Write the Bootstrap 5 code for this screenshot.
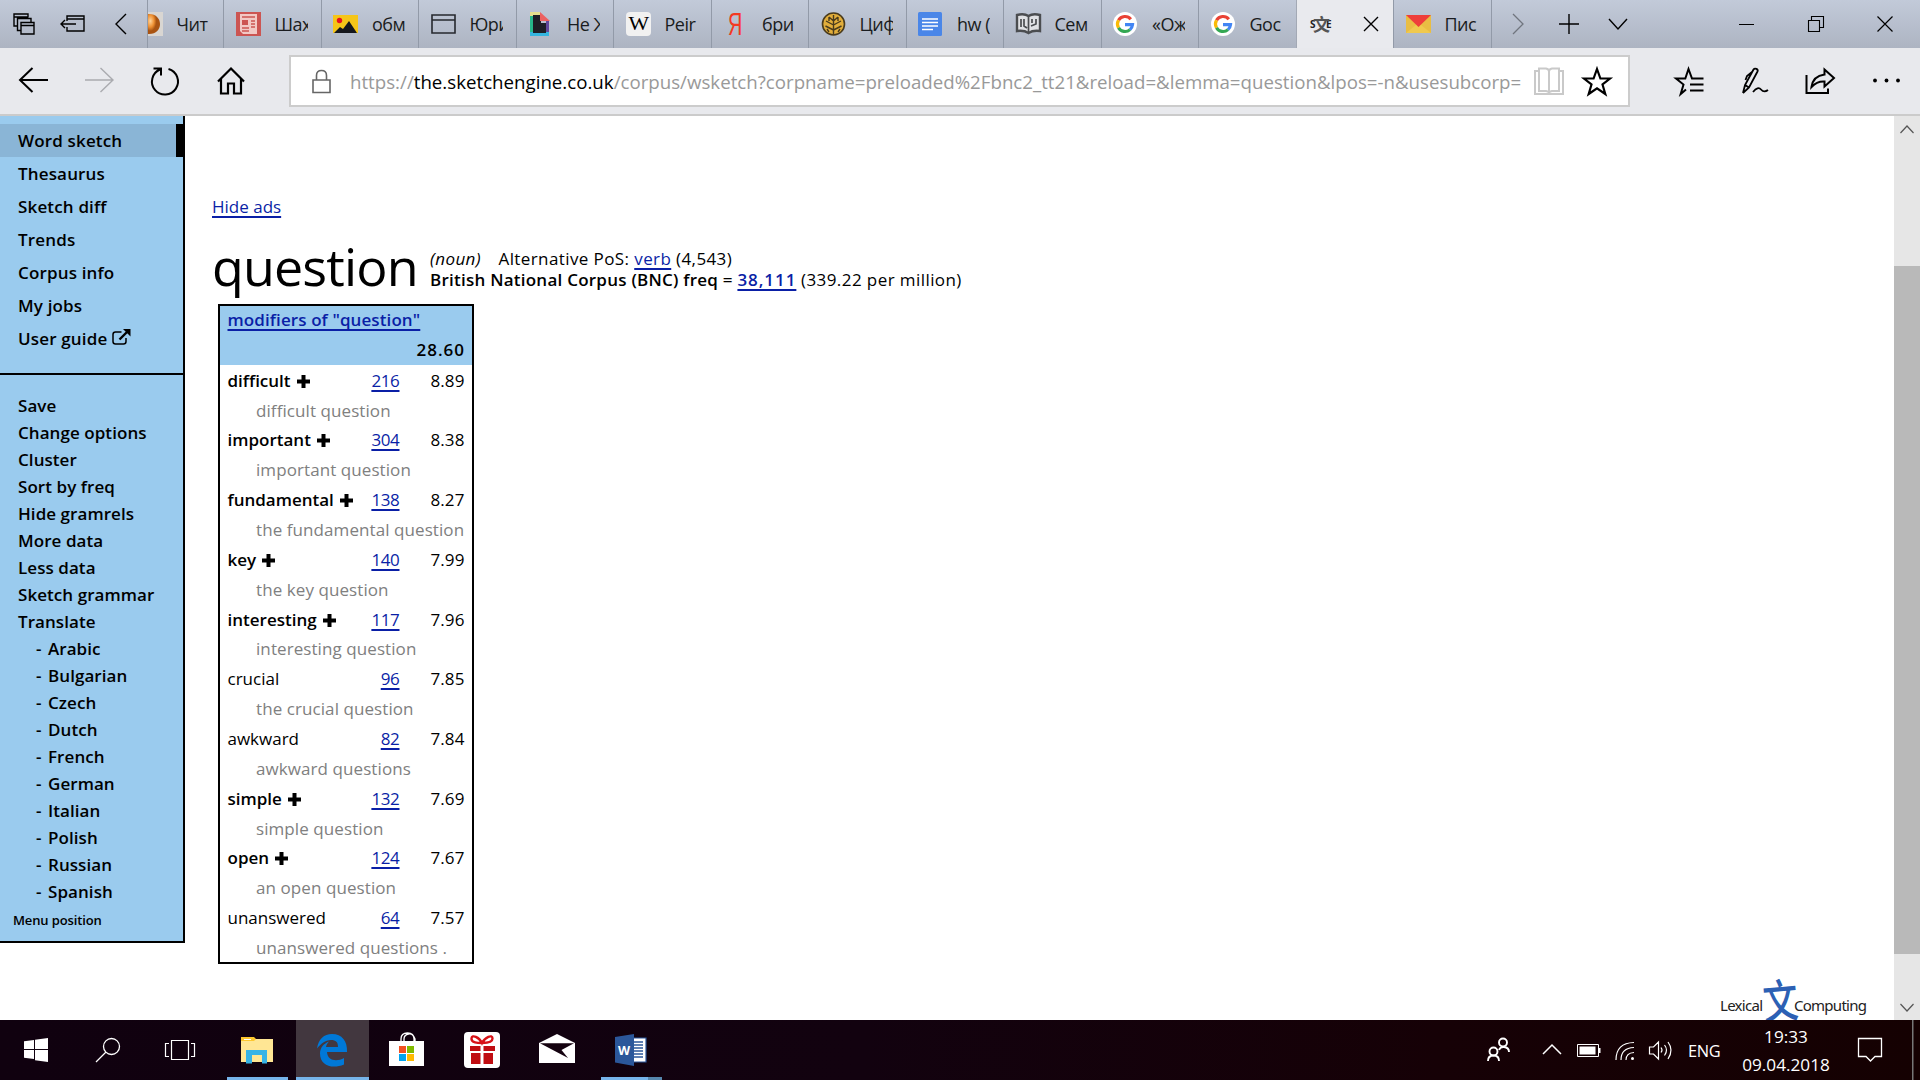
<!DOCTYPE html>
<html lang="en">
<head>
<meta charset="utf-8">
<title>Word sketch: question</title>
<link rel="stylesheet" href="https://cdn.jsdelivr.net/npm/bootstrap@5.3.0/dist/css/bootstrap.min.css">
<script src="https://cdn.jsdelivr.net/npm/bootstrap@5.3.0/dist/js/bootstrap.bundle.min.js"></script>
<style>
body{font-family:"Open Sans","Noto Sans",sans-serif;font-size:17px;color:#000;background:#fff;width:1920px;height:1080px;overflow:hidden;font-variant-ligatures:none}
svg{display:block;flex:none;overflow:visible}
.ln{fill:none;stroke:#000;stroke-width:1.4}
.tabstrip{height:48px;background:linear-gradient(#c2cad9,#adb4c2)}
.tabtools{width:146.5px;padding-left:13px}
.btab{width:97.5px;border-left:1.5px solid #929aa8;padding-left:11.5px;font-size:18px;letter-spacing:-.5px;color:#1a1c20;flex:none}
.btab svg{margin-right:14px}
.tabname{width:33px;overflow:hidden;white-space:nowrap;line-height:30px}
.tab-first{width:76.5px;padding-left:0}
.tab-now{background:#e9eaee;border-color:#a3a9b5;padding-left:13px}
.strip-end{border-left:1.5px solid #929aa8;padding-left:20px}
.navrow{height:68px;background:#e8e9ed;border-bottom:2px solid #cbcbcb}
.addr{width:1341px;height:52px;border:2px solid #ccc;background:#fff;margin-left:44px}
.url{font-size:18.7px;color:#999;width:1173px;white-space:nowrap;overflow:hidden;margin-left:18px;padding-top:2px}
.page-area{height:904px;overflow:hidden}
.sidebar{width:185px;height:827px;background:#9acbee;border-right:2px solid #000;border-bottom:2px solid #000;font-weight:600}
.tools{padding-top:8px;height:259px;border-bottom:2px solid #000}
.tools a,.opts a{display:block;color:#000;text-decoration:none;padding-left:18px;white-space:nowrap;letter-spacing:.06px}
.tools a{height:33px;line-height:33px;letter-spacing:.16px}
.tools a.now{background:#8ab5d6;border-right:7px solid #000}
.opts{padding-top:16.5px}
.opts a{height:27px;line-height:27px}
.opts a.lang{padding-left:36px;word-spacing:2px}
.opts a.pos{font-size:13px;padding-left:13px;height:30px;line-height:31px;letter-spacing:-.12px}
.lk{color:#0a1fa6;text-decoration:underline;text-decoration-thickness:2px;text-underline-offset:3px;text-decoration-skip-ink:none}
.content-col{padding:79px 0 0 27px}
.hide-ads{line-height:24px;height:24px}
.headrow{height:60px;margin-top:16px}
.headword{font-size:52px;line-height:61px;letter-spacing:-.85px;width:218px}
.facts{line-height:21px;padding-top:12.5px;white-space:pre;letter-spacing:.24px}
.facts b{font-weight:600}
.facts i{margin-right:3px}
.facts .alt{letter-spacing:.4px}
.facts b .lk{letter-spacing:.95px}
.facts .pm{letter-spacing:.42px}
.ws{width:256px;height:660px;border:2px solid #000;margin:9px 0 0 6px}
.ws-head{height:59px;background:#9acbee;padding:0 7px 0 7.5px;font-weight:600}
.ws-head .gramrel{height:29.5px;line-height:27.5px;letter-spacing:.1px}
.ws-head .total{height:29.5px;line-height:28.5px;letter-spacing:1px}
.rowlist{padding-top:.7px}
.wr{height:29.87px;line-height:29.87px;padding-left:7.5px;white-space:nowrap}
.wr .w{flex:1;min-width:0}
.wr .n{width:40px;flex:none;text-align:right;letter-spacing:-.35px}
.wr .s{width:65px;flex:none;text-align:right;margin-right:7.5px;letter-spacing:.1px}
.ex{height:29.87px;line-height:29.87px;padding-left:36px;color:#808080;white-space:nowrap;letter-spacing:.08px}
.plus{display:inline-block;margin-left:6px;vertical-align:-1px}
.logo-row{margin:auto 26px 0 0;height:44px}
.sbar{width:26px;background:#e6e6e6}
.thumb{height:688px;background:#b9b9b9}
.taskbar{height:60px;background:linear-gradient(90deg,#10010f 0,#12020f 45%,#160106 75%,#150102)}
.tk{height:60px;flex:none}
.on{border-bottom:3px solid #76b4ea}
.edge-tile{width:73px;margin-left:8px;background:#42373f}
.w-logo{font:700 12.5px "Open Sans",sans-serif;fill:#fff}
.tray{color:#fff}
.lang-ind{width:64px;font-size:16.4px;letter-spacing:-.3px;line-height:61px;padding-left:16px;margin-left:-7px}
.clock{width:100px;text-align:center;line-height:28px;font-size:17.2px;padding-top:3px}
</style>
</head>
<body class="d-flex flex-column">

<!-- Tab strip -->
<div class="tabstrip d-flex flex-none">
  <div class="tabtools d-flex align-items-center">
    <svg width="23" height="22" class="ln"><path d="M4.500 13H1V1h14v3.500M1 4h14M8 17.500H4.500V5.500H18V9"/><path d="M8 9.500h13V21H8zM8 12.500h13"/></svg>
    <svg width="25" height="18" class="ln" style="margin-left:24px"><path d="M7 6V1h17v15H7v-4M7 4h17M1 9h15M5 5L1 9l4 4"/></svg>
    <svg width="12" height="22" class="ln" style="margin-left:30px"><path d="M11 1L1 11l10 10"/></svg>
  </div>
  <div class="btab tab-first d-flex align-items-center"><svg width="15" height="24"><defs><radialGradient id="orb" cx=".2" cy=".35"><stop offset="0" stop-color="#ffd49a"/><stop offset=".6" stop-color="#ee9032"/><stop offset="1" stop-color="#a95311"/></radialGradient></defs><path d="M0 0h15v24H0z" fill="#d9d6d2"/><path d="M0 2c16-1 16 21 0 20z" fill="url(#orb)"/></svg><span class="tabname">Чит</span></div>
  <div class="btab d-flex align-items-center"><svg width="25" height="24"><path fill="#cc5552" d="M0 0h25v24H0z"/><path fill="#f2c9c5" d="M4 2h17v20H7l-3-3z"/><path fill="none" stroke="#cc5552" stroke-width="1.500" d="M6 5h13M6 16h7M6 19h7M15 9h4M15 12h4M15 15h4"/><path fill="#cc5552" d="M6 8h6v5H6z"/></svg><span class="tabname">Шах</span></div>
  <div class="btab d-flex align-items-center"><svg width="25" height="18"><path fill="#f5c518" d="M0 0h25v18H0z"/><circle cx="6.500" cy="5.500" r="2.700" fill="#e8131d"/><path fill="#16181d" d="M1 18l6-6 3 2 6-8 8 12z"/></svg><span class="tabname">обм</span></div>
  <div class="btab d-flex align-items-center"><svg width="25" height="20" class="ln"><path d="M1 1h23v18H1zM1 6h23" stroke="#26282e" stroke-width="1.600"/></svg><span class="tabname">Юри</span></div>
  <div class="btab d-flex align-items-center"><svg width="25" height="24"><path fill="#e5e08d" d="M2 0h10v4H2z"/><path fill="#27b78a" d="M2 4h3v17H2z"/><path fill="#35b5df" d="M2 20h19v4H2z"/><path fill="#61479b" d="M18 9h3v11h-3z"/><path fill="#1e1f26" d="M5 3h8v8h5v10H5z"/><path fill="#ec6161" d="M12 0l10 9H12z"/></svg><span class="tabname">Не Ж</span></div>
  <div class="btab d-flex align-items-center"><svg width="25" height="24"><rect width="25" height="24" rx="4" fill="#f1f1f1"/><text x="12.500" y="18" text-anchor="middle" font-family="Liberation Serif,serif" font-size="19" textLength="20" lengthAdjust="spacingAndGlyphs">W</text></svg><span class="tabname">Peir</span></div>
  <div class="btab d-flex align-items-center"><svg width="25" height="26"><text x="12" y="24" text-anchor="middle" font-family="Liberation Sans,sans-serif" font-size="31" fill="#f33922" textLength="14" lengthAdjust="spacingAndGlyphs">Я</text></svg><span class="tabname">бри</span></div>
  <div class="btab d-flex align-items-center"><svg width="25" height="24"><circle cx="12.500" cy="12" r="11" fill="#e2ae3b" stroke="#4a3b1c" stroke-width="1.600"/><path d="M12.500 3v20M12.500 9L8 5M12.500 13L5 9M12.500 18l-8-4M12.500 9L17 5M12.500 13L20 9M12.500 18l8-4M8 5v4M17 5v4M8 20l-2-3M17 20l2-3" fill="none" stroke="#4a3b1c" stroke-width="1.400"/></svg><span class="tabname">Циф</span></div>
  <div class="btab d-flex align-items-center"><svg width="25" height="24"><rect width="24" height="24" rx="1.500" fill="#4a86e8"/><path d="M4 7h16M4 10.500h16M4 14h16M4 17.500h11" stroke="#fff" stroke-width="1.700"/></svg><span class="tabname">hw (</span></div>
  <div class="btab d-flex align-items-center"><svg width="25" height="22"><path d="M1 2q7-2 11.500 1Q17 0 24 2v16q-7-1-11.500 2Q8 17 1 18z" fill="#e0e1e4" stroke="#4b4d50" stroke-width="2.400"/><path d="M12.500 3v16M5 6v8M8 6v7l3 2M20 6v5l-5 2M16 6v4" fill="none" stroke="#4b4d50" stroke-width="1.700"/></svg><span class="tabname">Сем</span></div>
  <div class="btab d-flex align-items-center"><svg width="25" height="24"><ellipse cx="12" cy="12" rx="12" ry="12" fill="#fff"/><g fill="none" stroke-width="3.200"><path d="M17.800 7.200A7.500 7.500 0 0 0 5.500 8.300" stroke="#e94235"/><path d="M5.500 8.300a7.500 7.500 0 0 0 0 7.400" stroke="#fabb05"/><path d="M5.500 15.700a7.500 7.500 0 0 0 11.500 1.900" stroke="#34a853"/><path d="M17 17.600a7.500 7.500 0 0 0 2.500-4.900H12" stroke="#4285f4"/></g></svg><span class="tabname">«Ож</span></div>
  <div class="btab d-flex align-items-center"><svg width="25" height="24"><ellipse cx="12" cy="12" rx="12" ry="12" fill="#fff"/><g fill="none" stroke-width="3.200"><path d="M17.800 7.200A7.500 7.500 0 0 0 5.500 8.300" stroke="#e94235"/><path d="M5.500 8.300a7.500 7.500 0 0 0 0 7.400" stroke="#fabb05"/><path d="M5.500 15.700a7.500 7.500 0 0 0 11.500 1.900" stroke="#34a853"/><path d="M17 17.600a7.500 7.500 0 0 0 2.500-4.900H12" stroke="#4285f4"/></g></svg><span class="tabname">Goc</span></div>
  <div class="btab tab-now d-flex align-items-center"><svg width="22" height="22" font-family="Open Sans,sans-serif" font-weight="700" font-size="10" fill="#222"><text x="0" y="15">S</text><text x="16" y="15">E</text><text x="3" y="18" font-family="Noto Sans CJK SC,sans-serif" font-size="17" fill="#555">文</text></svg><svg width="16" height="16" class="ln" style="margin-left:17px"><path d="M1 1l14 14M15 1L1 15"/></svg></div>
  <div class="btab d-flex align-items-center"><svg width="25" height="18"><path fill="#e9bd43" d="M0 0h25v18H0z"/><path fill="#f0c94e" d="M0 18L12.500 8 25 18z"/><path fill="#ee3e3b" d="M0 0h25L12.500 12z"/></svg><span class="tabname">Пис</span></div>
  <div class="strip-end d-flex align-items-center">
    <svg width="12" height="22"><path d="M1 1l10 10L1 21" fill="none" stroke="#70757e" stroke-width="1.300"/></svg>
    <svg width="20" height="20" class="ln" style="margin-left:35px"><path d="M10 0v20M0 10h20"/></svg>
    <svg width="20" height="11" class="ln" style="margin-left:29px"><path d="M1 0l9 10 9-10"/></svg>
    <svg width="16" height="16" class="ln" style="margin-left:111px"><path d="M0 8.500h15" stroke-width="1"/></svg>
    <svg width="16" height="16" class="ln" style="margin-left:53px"><path d="M.5 4.500h11v11H.5zM3.500 4.500v-4h12v11h-4" stroke-width="1.100"/></svg>
    <svg width="16" height="16" class="ln" style="margin-left:53px"><path d="M.5.5l15 15M15.500.5l-15 15" stroke-width="1.200"/></svg>
  </div>
</div>

<!-- Address row -->
<div class="navrow d-flex align-items-center">
  <svg width="29" height="28" class="ln" style="margin-left:19px;stroke-width:2"><path d="M29 13H1M13.500 1l-12.500 12 12.500 12"/></svg>
  <svg width="29" height="28" class="ln" style="margin-left:37px;stroke:#a3a4a8;opacity:.9"><path d="M0 13h28M15.500 1L28 13 15.500 25" /></svg>
  <svg width="28" height="28" class="ln" style="margin-left:37px;stroke-width:2"><path d="M17.500 2A13 13 0 1 1 9 2.500M2.500 1.500H10v7"/></svg>
  <svg width="28" height="28" class="ln" style="margin-left:38px;stroke-width:2.2"><path d="M1 14.500L14 1.500l13 13M4 12v14.500h7V16.500h6v10h7V12"/></svg>
  <div class="addr d-flex align-items-center">
    <svg width="20" height="25" class="ln" style="margin-left:21px;stroke:#666;stroke-width:1.6"><path d="M1 11h17v12.500H1zM4.500 11V6.500q0-5 5-5t5 5V11"/></svg>
    <div class="url">https://<span class="text-black">the.sketchengine.co.uk</span>/corpus/wsketch?corpname=preloaded%2Fbnc2_tt21&amp;reload=&amp;lemma=question&amp;lpos=-n&amp;usesubcorp=</div>
    <svg width="30" height="28" style="margin-left:11px;fill:none;stroke:#c9c9c9;stroke-width:2"><path d="M5 4H1v23h28V4h-4M15 4v21M5 1.500h7q3 .5 3 3 0-2.500 3-3h7V24h-7q-3 .500-3 2 0-1.500-3-2H5z"/></svg>
    <svg width="30" height="29" class="ln" style="margin-left:18px;stroke-width:2.200"><path d="M15 2l3.400 9.500H28l-7.500 6 2.800 9.500-8.300-5.700L6.700 27l2.800-9.500L2 11.500h9.600z"/></svg>
  </div>
  <svg width="30" height="29" class="ln" style="margin-left:44px;stroke-width:2"><path d="M12 22.500L6.700 27l2.800-9.500L2 11.500h9.300L14.500 2l3.500 9.500h11.500M16 17.500h13.500M16 23.500h13.500"/></svg>
  <svg width="27" height="28" class="ln" style="margin-left:38px;stroke-width:1.8"><path d="M1 26l2-8L11.500 2.500q1-1.500 3-.6 1.800 1 1 2.600L7 20.500 1 26M3 18l4 2.500M10 5l-5 4-1.500 4M11 25q5-6 8-2.500t7 .5"/></svg>
  <svg width="30" height="27" class="ln" style="margin-left:36px;stroke-width:2"><path d="M1.500 7v18H23v-4.500M19.500 1.500L29 10l-9.500 8.500v-5Q12 13 6.500 19 8 8 19.500 6.500z"/></svg>
  <svg width="29" height="6" style="margin-left:37px"><circle cx="3" cy="2.500" r="1.900"/><circle cx="14.500" cy="2.500" r="1.900"/><circle cx="26" cy="2.500" r="1.900"/></svg>
</div>

<!-- Page -->
<div class="page-area d-flex">
  <aside class="sidebar">
    <nav class="tools">
      <a class="now">Word sketch</a><a>Thesaurus</a><a>Sketch diff</a><a>Trends</a><a>Corpus info</a><a>My jobs</a>
      <a class="d-flex align-items-center">User guide<svg width="19" height="17" style="margin:-3px 0 0 5px"><path d="M9.500 3H3.500Q1 3 1 5.500v7Q1 15 3.500 15h8q2.500 0 2.500-2.500V9" fill="none" stroke="#000" stroke-width="1.500"/><path d="M7.500 10.500L15 3" stroke="#000" stroke-width="2.400"/><path d="M11 0h7.500v7.500z"/></svg></a>
    </nav>
    <nav class="opts">
      <a>Save</a><a>Change options</a><a>Cluster</a><a>Sort by freq</a><a>Hide gramrels</a><a>More data</a><a>Less data</a><a>Sketch grammar</a><a>Translate</a>
      <a class="lang">- Arabic</a><a class="lang">- Bulgarian</a><a class="lang">- Czech</a><a class="lang">- Dutch</a><a class="lang">- French</a><a class="lang">- German</a><a class="lang">- Italian</a><a class="lang">- Polish</a><a class="lang">- Russian</a><a class="lang">- Spanish</a>
      <a class="pos">Menu position</a>
    </nav>
  </aside>

  <main class="content-col flex-grow-1 d-flex flex-column">
    <div class="hide-ads"><a class="lk">Hide ads</a></div>
    <div class="headrow d-flex">
      <div class="headword">question</div>
      <div class="facts"><span class="alt"><i>(noun)</i>   Alternative PoS: <a class="lk">verb</a> (4,543)</span>
<b>British National Corpus (BNC) freq = <a class="lk">38,111</a></b> <span class="pm">(339.22 per million)</span></div>
    </div>
    <div class="ws flex-shrink-0">
      <div class="ws-head"><div class="gramrel"><a class="lk">modifiers of "question"</a></div><div class="total text-end">28.60</div></div>
      <div id="rows" class="rowlist"></div>
    </div>
    <div class="logo-row align-self-end"><svg width="148" height="44" font-family="Noto Sans,sans-serif" font-size="15"><text x="0" y="35" textLength="43" fill="#222">Lexical</text><text x="43" y="42" font-family="Noto Sans CJK SC,sans-serif" font-weight="500" font-size="46" textLength="35" lengthAdjust="spacingAndGlyphs" fill="#2c60b4" transform="rotate(-5 62 25)">文</text><text x="74" y="35" textLength="73" fill="#222">Computing</text></svg></div>
  </main>

  <div class="sbar d-flex flex-column">
    <svg width="26" height="150"><path d="M6.500 17l6.500-7 6.500 7" fill="none" stroke="#555" stroke-width="1.200"/></svg>
    <div class="thumb"></div>
    <svg width="26" height="66"><path d="M6.500 50l6.500 7 6.500-7" fill="none" stroke="#555" stroke-width="1.200"/></svg>
  </div>
</div>

<!-- Taskbar -->
<div class="taskbar d-flex position-relative">
  <svg class="tk" width="72" height="60"><path fill="#fff" d="M24 21.300l10-1.400v9H24zM35 19.700L48 18v11H35zM24 30h10v9l-10-1.300zM35 30h13v12l-13-1.800z"/></svg>
  <svg class="tk" width="72" height="60"><g fill="none" stroke="#fff" stroke-width="1.300"><circle cx="39.500" cy="26.500" r="8"/><path d="M34 32l-10 10"/></g></svg>
  <svg class="tk" width="83" height="60"><g fill="none" stroke="#fff" stroke-width="1.200"><path d="M27.500 20.500h17v19h-17zM25 23.500h-3.500v13H25M47 23.500h3.500v13H47"/></g></svg>
  <svg class="tk on" width="61" height="60"><path fill="#ffe694" d="M14 21l14-2h18v23H14z"/><path fill="#fdc82f" d="M14 17h13l2 2-2 2H14z"/><path stroke="#fff" d="M17 19.500h7"/><path fill="#36b3e6" d="M19 30h21v13.500h-5V35H25v8.500h-6z"/></svg>
  <div class="tk on edge-tile"><svg width="73" height="57"><path fill="#0078d7" d="M21 28.500C22.500 19 28 14 36 14c10 0 15.500 7 15 18H31c.5 9 10 10 17 6v6.500c-12 5-24 1-24-11 0-6 4-10 9-12-2 2-2.500 3.500-3 5.500h12c0-5-2-7-7-7-6 0-10 4-14 8.500z"/></svg></div>
  <svg class="tk" width="75" height="60"><path d="M32 22v-3q0-6 6.500-6t6.500 6v3M35 22v-3q0-4 4.500-5t6.500 5v3" fill="none" stroke="#fff" stroke-width="1.300"/><path fill="#fff" d="M20 21h35v25H20z"/><path fill="#f25022" d="M30 26h7v7h-7z"/><path fill="#7fba00" d="M38 26h7v7h-7z"/><path fill="#00a4ef" d="M30 34h7v7h-7z"/><path fill="#ffb900" d="M38 34h7v7h-7z"/></svg>
  <svg class="tk" width="75" height="60"><rect x="20" y="12" width="36" height="36" rx="4" fill="#fff"/><path fill="#c00d12" d="M26 26h10.500v5H26zM39.500 26H51v5H39.500zM27 33h9.500v11H27zM39.500 33H49v11h-9.500z"/><path d="M38 23c-3-6-10-9-10.500-4.500S34 23 38 23c4 0 10.500 0 10.500-4.500S41 17 38 23z" fill="none" stroke="#d71218" stroke-width="2.400"/></svg>
  <svg class="tk" width="75" height="60"><path fill="#fff" d="M20 23l18-9 18 9v20H20z"/><path fill="#14020f" d="M21 23.300h34L42.500 30l6.500 8z"/></svg>
  <svg class="tk" width="75" height="60"><path fill="#fff" stroke="#2b579a" stroke-width="1.200" d="M32 18h20v24H32z"/><path stroke="#2b579a" stroke-width="1.300" d="M36 22h13M36 25h13M36 28h13M36 31h13M36 34h13M36 37h13"/><path fill="#2b579a" d="M21 17l19-3v32l-19-3.500z"/><text class="w-logo" x="24" y="35">W</text><path fill="#76b4ea" d="M7 57h47v3H7z"/><path fill="#5687ad" d="M54 57h14v3H54z"/></svg>
  <div class="tray ms-auto d-flex">
    <svg class="tk" width="62" height="60" style="fill:none;stroke:#fff;stroke-width:1.900"><circle cx="26" cy="22.500" r="4"/><circle cx="16.500" cy="31.500" r="4"/><path d="M22 30q1.500-3.500 5-3 5 .5 5 5M11 41q0-5.500 5.500-5.500T22 41"/></svg>
    <svg class="tk" width="30" height="60" style="fill:none;stroke:#fff;stroke-width:1.500"><path d="M4 34l9-9 9 9"/></svg>
    <svg class="tk" width="36" height="60"><path fill="none" stroke="#fff" d="M8.500 24.500h21v12h-21z"/><path fill="#fff" d="M10.500 26.500h16v8h-16zM30 28h1.500v5H30z"/></svg>
    <svg class="tk" width="36" height="60" style="fill:none;stroke:#fff;stroke-width:1.200"><path d="M11 40Q11 23 29 22.500M16 40q0-12 13-12.500M21 40q0-7 8-7.500" /><circle cx="27.500" cy="38.500" r="1.500" fill="#fff" stroke="none"/></svg>
    <svg class="tk" width="38" height="60" style="fill:none;stroke:#fff;stroke-width:1.200"><path d="M8.500 27h4l5-5v17l-5-5h-4zM20 27.500q2 2.500 0 5M23.500 25q4 5 0 10.500M27 22q6 8 0 17"/></svg>
    <div class="lang-ind">ENG</div>
    <div class="clock">19:33<br>09.04.2018</div>
    <svg class="tk" width="84" height="60"><path fill="none" stroke="#fff" stroke-width="1.300" d="M22.500 18.500h23v18H39l-4.500 4.500-4.500-4.500h-7.500z"/><path fill="#777" d="M76 0h1.500v60H76z"/></svg>
  </div>
</div>

<script>
// word, frequency, score, longest-commonest match, has more senses
const data=[["difficult",216,"8.89","difficult question",1],["important",304,"8.38","important question",1],["fundamental",138,"8.27","the fundamental question",1],["key",140,"7.99","the key question",1],["interesting",117,"7.96","interesting question",1],["crucial",96,"7.85","the crucial question",0],["awkward",82,"7.84","awkward questions",0],["simple",132,"7.69","simple question",1],["open",124,"7.67","an open question",1],["unanswered",64,"7.57","unanswered questions .",0]];
const plus='<svg class="plus" width="13" height="13"><path d="M4.500 0h4v4.500H13v4H8.500V13h-4V8.500H0v-4h4.500z"/></svg>';
document.getElementById("rows").innerHTML=data.map(([w,n,s,e,m])=>`<div class="wr d-flex"><span class="w ${m?"fw-semibold":""}">${w}${m?plus:""}</span><span class="n"><a class="lk">${n}</a></span><span class="s">${s}</span></div><div class="ex">${e}</div>`).join("");
</script>
</body>
</html>
